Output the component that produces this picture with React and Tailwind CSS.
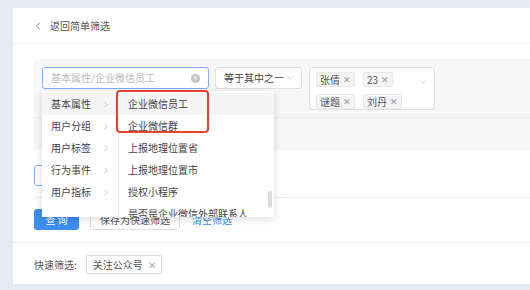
const leftItems = ["基本属性", "用户分组", "用户标签", "行为事件", "用户指标"];
const rightItems = ["企业微信员工", "企业微信群", "上报地理位置省", "上报地理位置市", "授权小程序", "是否是企业微信外部联系人"];
const valueTags = [["张倩", "23"], ["谜题", "刘丹"]];

function Chevron({ dir = "right", className = "" }) {
    const pts = {
        right: "2,1 6,5 2,9",
        left: "6,1 2,5 6,9",
        down: "1,2 5,6 9,2",
    }[dir];
    return (
        <svg viewBox="0 0 10 10" className={className} fill="none" stroke="currentColor" strokeWidth="1">
            <polyline points={pts} />
        </svg>
    );
}

function Tag({ label }) {
    return (
        <span className="flex h-[15px] items-center gap-[3px] rounded-[2px] border border-[#e9e9eb] bg-[#f4f4f5] px-[3px] text-[#555]">
            {label}
            <span className="text-[9px] text-[#999]">✕</span>
        </span>
    );
}

function Dropdown() {
    return (
        <div className="absolute left-0 top-[24px] z-10 flex h-[126px] shadow-[0_2px_8px_rgba(0,0,0,0.15)]">
            <div className="w-[77px] border-r border-[#ececec] bg-white pt-[2px]">
                {leftItems.map((item, i) => (
                    <div key={item} className={`flex h-[22px] items-center justify-between pl-[9px] pr-[8px] text-[#444] ${i === 0 ? "bg-[#f5f5f6]" : ""}`}>
                        {item}
                        <Chevron className="h-[7px] w-[7px] text-[#aaa]" />
                    </div>
                ))}
            </div>
            <div className="relative w-[155px] overflow-hidden bg-white pt-[2px]">
                {rightItems.map((item, i) => (
                    <div key={item} className={`flex h-[22px] items-center whitespace-nowrap pl-[9px] text-[#444] ${i === 0 ? "bg-[#f5f5f6]" : ""}`}>
                        {item}
                    </div>
                ))}
                <div className="absolute right-[2px] top-[100px] h-[17px] w-[4px] rounded-full bg-[#dcdcdc]" />
            </div>
            <div className="absolute left-[74px] top-[-1px] h-[43px] w-[93px] rounded-[4px] border-2 border-[#e5432f]" />
        </div>
    );
}

export default function App() {
    return (
        <div className="h-[290px] overflow-hidden bg-[#e6e8f3] pl-[13px] pt-2 font-['Noto_Sans_CJK_SC',sans-serif] text-[10px] leading-none">
            <div className="h-[276px] w-[540px] bg-white">
                <div className="flex h-9 items-center gap-[7px] border-b border-[#efefef] pl-[22px] text-[#555]">
                    <Chevron dir="left" className="h-[8px] w-[8px] text-[#666]" />
                    返回简单筛选
                </div>
                <div className="pl-[21px] pt-[15px]">
                    <div className="bg-[#f7f7f8]">
                        <div className="flex h-[59px] items-start border-b border-[#ececec] pl-2 pt-2">
                            <div className="relative">
                                <div className="flex h-[22px] w-[167px] items-center justify-between rounded-[3px] border border-[#7fb2f3] bg-white pl-[8px] pr-[8px] text-[#bbb]">
                                    基本属性/企业微信员工
                                    <span className="flex h-[9px] w-[9px] items-center justify-center rounded-full bg-[#c4c4c4] text-[6px] text-white">✕</span>
                                </div>
                                <Dropdown />
                            </div>
                            <div className="ml-[6px] flex h-[22px] w-[87px] items-center justify-between rounded-[3px] border border-[#e0e0e0] bg-white pl-[8px] pr-[7px] text-[#444]">
                                等于其中之一
                                <Chevron dir="down" className="h-[7px] w-[7px] text-[#bbb]" />
                            </div>
                            <div className="ml-[7px] flex h-[43px] w-[126px] items-start justify-between rounded-[3px] border border-[#e0e0e0] bg-white pl-[6px] pr-[7px] pt-[4px]">
                                <div className="flex flex-col gap-[7px]">
                                    {valueTags.map((row, i) => (
                                        <div key={i} className="flex gap-[8px]">
                                            {row.map((t) => <Tag key={t} label={t} />)}
                                        </div>
                                    ))}
                                </div>
                                <Chevron dir="down" className="mt-[7px] h-[7px] w-[7px] text-[#ccc]" />
                            </div>
                        </div>
                        <div className="h-8" />
                    </div>
                    <div className="h-[48px] border-b border-[#ececec] pt-[15px]">
                        <div className="h-[21px] w-[220px] rounded-[3px] border border-[#7fb2f3] bg-white" />
                    </div>
                    <div className="flex items-center pb-[12px] pt-[11px]">
                        <button className="h-[21px] w-[45px] rounded-[3px] bg-[#3d8ef0] text-white">查 询</button>
                        <button className="ml-[11px] h-[21px] w-[90px] rounded-[3px] border border-[#dcdcdc] bg-white text-[#555]">保存为快速筛选</button>
                        <button className="ml-[12px] text-[#3d8ef0]">清空筛选</button>
                    </div>
                </div>
                <div className="flex items-center border-t border-[#ececec] pl-[21px] pt-[12px]">
                    <span className="text-[#555]">快速筛选:</span>
                    <span className="ml-[9px] flex h-[19px] w-[76px] items-center gap-[5px] rounded-[2px] border border-[#dcdcdc] pl-[6px] text-[#555]">
                        关注公众号
                        <span className="text-[10px] text-[#aaa]">✕</span>
                    </span>
                </div>
            </div>
        </div>
    );
}
